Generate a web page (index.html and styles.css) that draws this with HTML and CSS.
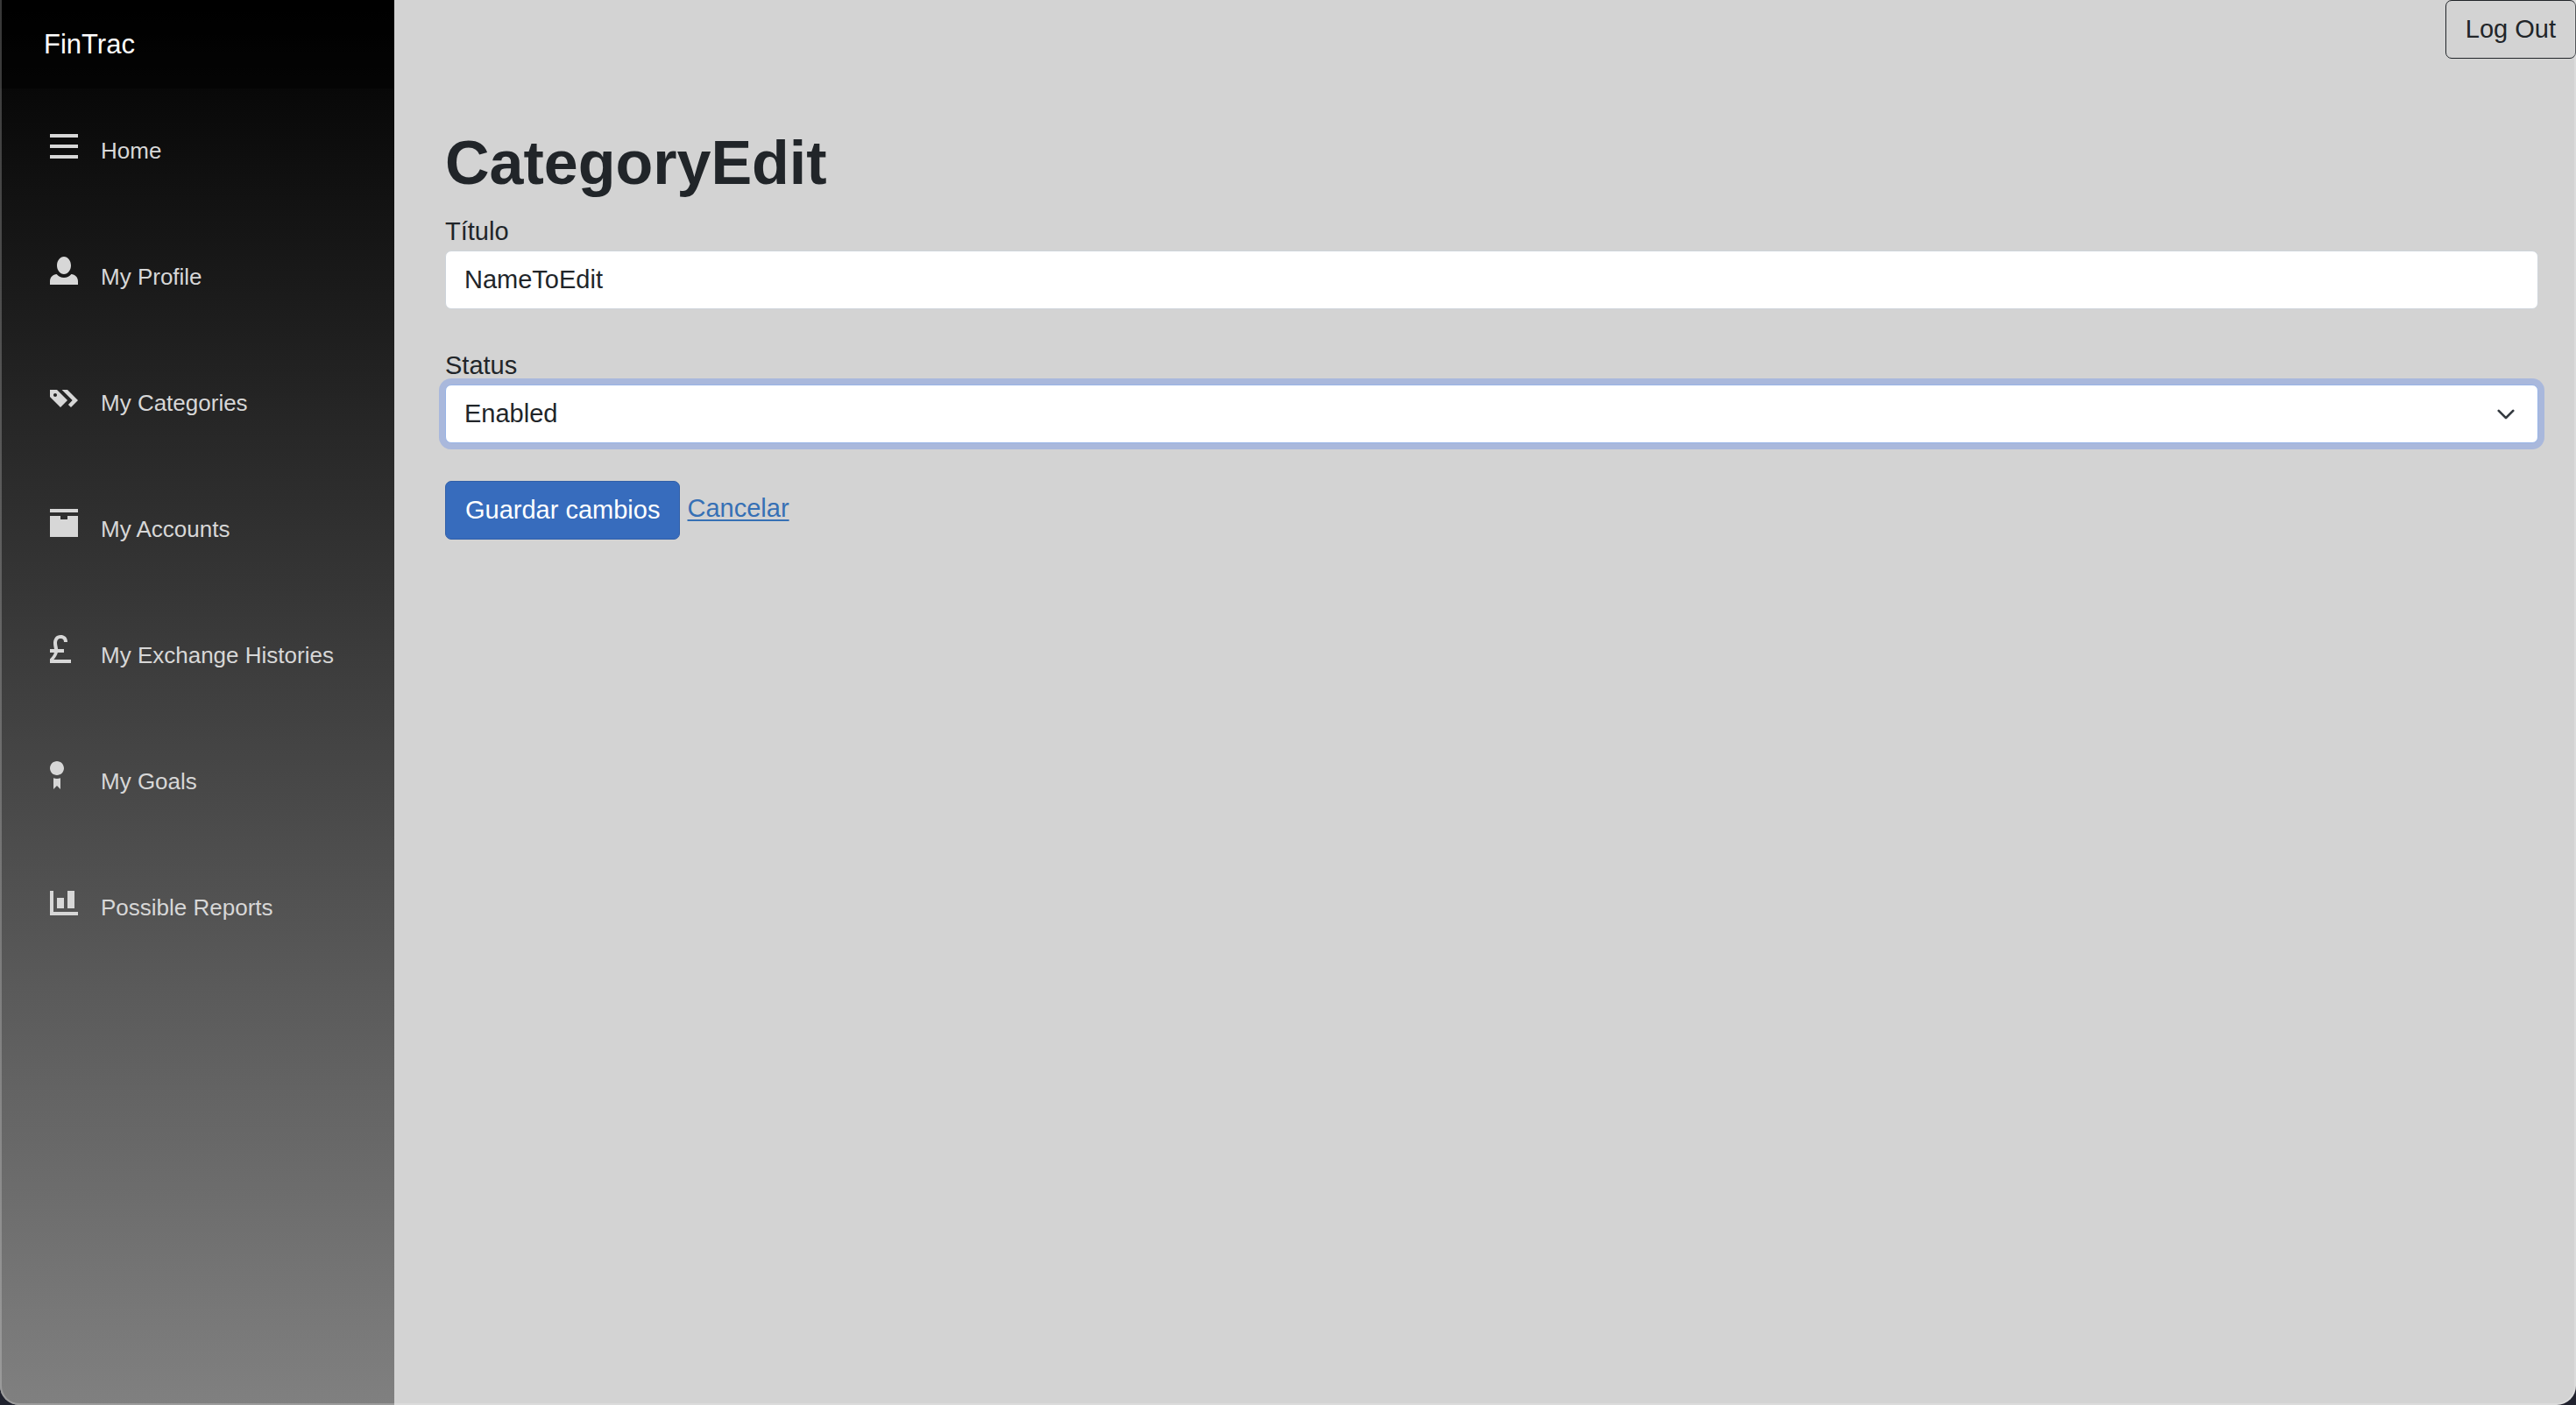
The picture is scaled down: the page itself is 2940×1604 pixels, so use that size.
FILE: index.html
```html
<!DOCTYPE html>
<html lang="es">
<head>
  <meta charset="utf-8">
  <meta name="viewport" content="width=device-width, initial-scale=1">
  <title>CategoryEdit</title>
  <link rel="stylesheet" href="styles.css">
</head>
<body>
  <div class="page">
    <aside class="sidebar">
      <div class="brand-row"><a class="brand" href="#">FinTrac</a></div>
      <nav class="nav">
        <a class="nav-link" href="#">
          <svg class="icon" viewBox="0 0 8 8" aria-hidden="true"><path d="M0 1v1h8v-1h-8zm0 3v1h8v-1h-8zm0 3v1h8v-1h-8z"/></svg>
          <span>Home</span>
        </a>
        <a class="nav-link" href="#">
          <svg class="icon" viewBox="0 0 8 8" aria-hidden="true"><path d="M4 0c-1.1 0-2 1.12-2 2.5s.9 2.5 2 2.5 2-1.12 2-2.5-.9-2.5-2-2.5zm-2.09 5c-1.06.05-1.91.92-1.91 2v1h8v-1c0-1.08-.84-1.95-1.91-2-.54.61-1.28 1-2.09 1-.81 0-1.55-.39-2.09-1z"/></svg>
          <span>My Profile</span>
        </a>
        <a class="nav-link" href="#">
          <svg class="icon" viewBox="0 0 8 8" aria-hidden="true"><path transform="translate(0 2)" d="M0 0v2l3 3 1.5-1.5.5-.5-2-2-1-1h-2zm3.41 0l3 3-1.19 1.22.78.78 2-2-3-3h-1.59zm-1.91 1c.28 0 .5.22.5.5s-.22.5-.5.5-.5-.22-.5-.5.22-.5.5-.5z"/></svg>
          <span>My Categories</span>
        </a>
        <a class="nav-link" href="#">
          <svg class="icon" viewBox="0 0 8 8" aria-hidden="true"><path d="M0 0v1h8v-1h-8zm0 2v6h8v-6h-3v1h-2v-1h-3z"/></svg>
          <span>My Accounts</span>
        </a>
        <a class="nav-link" href="#">
          <svg class="icon" viewBox="0 0 8 8" aria-hidden="true"><path d="M3 0c-.62 0-1.16.26-1.5.69-.34.43-.5.99-.5 1.56 0 .69.16 1.25.25 1.75h-1.25v1h1.22c-.11.45-.37.96-1.06 1.66l-.16.16v1.18h6v-1h-4.91c.64-.73.98-1.4 1.13-2h1.78v-1h-1.72c-.08-.68-.28-1.24-.28-1.75 0-.39.11-.73.28-.94.17-.21.37-.31.72-.31.39 0 .61.11.75.25s.25.36.25.75h1c0-.58-.17-1.1-.53-1.47-.36-.37-.88-.53-1.47-.53z"/></svg>
          <span>My Exchange Histories</span>
        </a>
        <a class="nav-link" href="#">
          <svg class="icon" viewBox="0 0 8 8" aria-hidden="true"><path d="M2 0c-1.1 0-2 .9-2 2s.9 2 2 2 2-.9 2-2-.9-2-2-2zm-1 4.81v3.19l1-1 1 1v-3.19c-.31.11-.65.19-1 .19s-.69-.08-1-.19z"/></svg>
          <span>My Goals</span>
        </a>
        <a class="nav-link" href="#">
          <svg class="icon" viewBox="0 0 8 8" aria-hidden="true"><path transform="translate(0 1)" d="M0 0v7h8v-1h-7v-6h-1zm5 0v5h2v-5h-2zm-3 2v3h2v-3h-2z"/></svg>
          <span>Possible Reports</span>
        </a>
      </nav>
    </aside>
    <main class="main">
      <header class="top-row">
        <button class="btn btn-outline" type="button">Log Out</button>
      </header>
      <article class="content">
        <h1 class="title">CategoryEdit</h1>
        <form class="form">
          <div class="field">
            <label for="titulo">Título</label>
            <input class="control" id="titulo" type="text" value="NameToEdit">
          </div>
          <div class="field">
            <label for="status">Status</label>
            <select class="control select focused" id="status">
              <option selected>Enabled</option>
              <option>Disabled</option>
            </select>
          </div>
          <div class="actions">
            <button class="btn btn-primary" type="submit">Guardar cambios</button>
            <a class="link" href="#">Cancelar</a>
          </div>
        </form>
      </article>
    </main>
  </div>
</body>
</html>
```
FILE: styles.css
```css
* {
  box-sizing: border-box;
}

body {
  margin: 0;
  background: #20222e;
  color: #212529;
  font: 29px/43px "Liberation Sans", Arial, sans-serif;
}

.page {
  position: relative;
  display: flex;
  min-height: 100vh;
  overflow: hidden;
  border-radius: 0 0 22px 22px;
  background: #d3d3d3;
}

/* thin light rim around the window */
.page::after {
  content: "";
  position: absolute;
  inset: 0;
  border: 2px solid rgba(255, 255, 255, 0.22);
  border-top: 0;
  border-radius: 0 0 22px 22px;
  pointer-events: none;
}

.sidebar {
  flex: 0 0 450px;
  background: linear-gradient(180deg, #000, #808080);
}

.brand-row {
  display: flex;
  align-items: center;
  height: 101px;
  padding-left: 50px;
  background: rgba(0, 0, 0, 0.4);
}

.brand {
  color: #fff;
  font-size: 31px;
  text-decoration: none;
}

.nav {
  display: flex;
  flex-direction: column;
  gap: 58px;
  padding: 28px 29px 29px 57px;
}

.nav-link {
  display: flex;
  align-items: baseline;
  gap: 26px;
  height: 86px;
  color: #d7d7d7;
  font-size: 26px;
  line-height: 86px;
  text-decoration: none;
}

.icon {
  flex: none;
  width: 32px;
  height: 32px;
  fill: currentColor;
}

.main {
  flex: 1;
  min-width: 0;
}

.top-row {
  display: flex;
  justify-content: flex-end;
}

.content {
  padding: 76px 43px 43px 58px;
}

.title {
  margin: 0 0 14px;
  font-size: 70px;
  line-height: 86px;
}

.form {
  display: flex;
  flex-direction: column;
  gap: 43px;
}

.field {
  display: flex;
  flex-direction: column;
}

.control {
  width: 100%;
  height: 67px;
  padding: 0 21px;
  border: 1px solid #ced4da;
  border-radius: 7px;
  background-color: #fff;
  color: inherit;
  font: inherit;
}

.select {
  appearance: none;
  background-image: url("data:image/svg+xml,%3Csvg xmlns='http://www.w3.org/2000/svg' viewBox='0 0 16 16'%3E%3Cpath fill='none' stroke='%23343a40' stroke-linecap='round' stroke-linejoin='round' stroke-width='2' d='m2 5 6 6 6-6'/%3E%3C/svg%3E");
  background-repeat: no-repeat;
  background-position: right 25px center;
  background-size: 22px 22px;
}

.focused {
  border-color: #98b4e6;
  outline: none;
  box-shadow: 0 0 0 7px #a9b8dc;
}

.btn {
  height: 67px;
  padding: 0 22px;
  border: 1px solid;
  border-radius: 7px;
  font: inherit;
  vertical-align: middle;
}

.btn-outline {
  border-color: #212529;
  background: transparent;
  color: #212529;
}

.btn-primary {
  border-color: #315fa8;
  background: #376cbd;
  color: #fff;
}

.link {
  color: #3670b5;
  text-decoration-thickness: 2px;
  text-underline-offset: 3px;
}
```
